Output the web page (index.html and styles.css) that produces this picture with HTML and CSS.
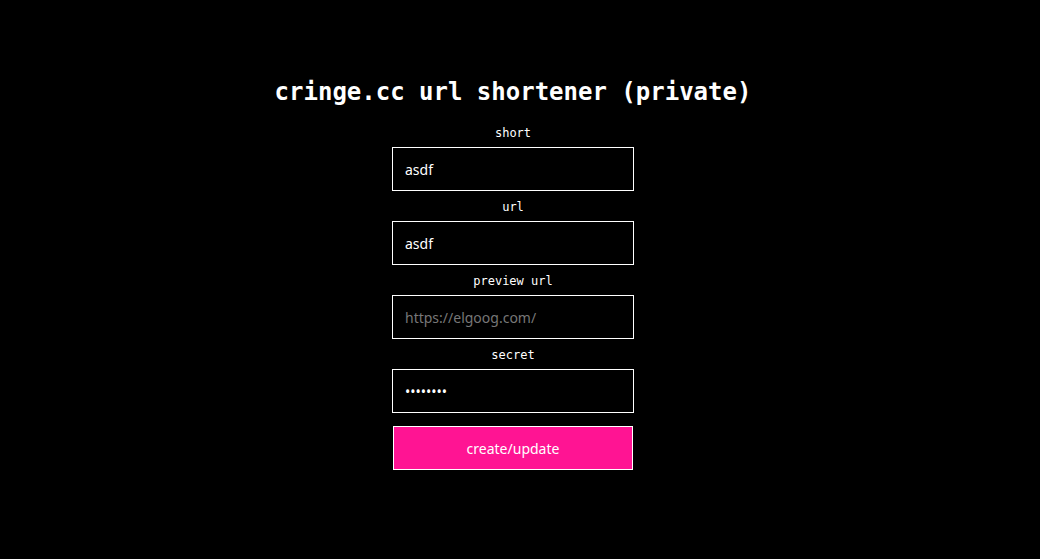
FILE: index.html
```html
<!DOCTYPE html>
<html>
<head>
<meta charset="utf-8">
<link rel="stylesheet" href="styles.css">
</head>
<body>
<main class="page">
  <h1 class="title">cringe.cc url shortener (private)</h1>
  <form class="form">
    <label class="label" for="short">short</label>
    <input class="field" id="short" type="text" value="asdf">
    <label class="label" for="url">url</label>
    <input class="field" id="url" type="text" value="asdf">
    <label class="label" for="preview">preview url</label>
    <input class="field" id="preview" type="text" placeholder="https://elgoog.com/">
    <label class="label" for="secret">secret</label>
    <input class="field" id="secret" type="password" value="12345678">
    <button class="submit" type="button">create/update</button>
  </form>
</main>
</body>
</html>
```

FILE: styles.css
```css
html, body {
  margin: 0;
  padding: 0;
  background: #000;
  color: #fff;
}
.page {
  display: flex;
  flex-direction: column;
  align-items: center;
  padding-top: 76px;
  padding-right: 14px;
}
.title {
  margin: 0 0 8px 0;
  font-family: "DejaVu Sans Mono", monospace;
  font-size: 24px;
  font-weight: bold;
  line-height: 33px;
}
.form {
  display: flex;
  flex-direction: column;
  align-items: center;
  width: 242px;
}
.label {
  display: block;
  height: 30px;
  line-height: 32px;
  font-family: "DejaVu Sans Mono", monospace;
  font-size: 12px;
  color: #fff;
  text-align: center;
}
.field {
  box-sizing: border-box;
  width: 242px;
  height: 44px;
  margin: 0;
  padding: 0 12px;
  border: 1px solid #fff;
  border-radius: 0;
  background: #000;
  color: #fff;
  font-family: "Noto Sans", sans-serif;
  font-size: 14px;
  outline: none;
}
.field::placeholder {
  color: #777;
}
.submit {
  box-sizing: border-box;
  width: 240px;
  height: 44px;
  margin-top: 13px;
  padding-top: 1px;
  border: 1px solid #fff;
  border-radius: 0;
  background: #ff1493;
  color: #fff;
  font-family: "Noto Sans", sans-serif;
  font-size: 14px;
  cursor: pointer;
}
```
